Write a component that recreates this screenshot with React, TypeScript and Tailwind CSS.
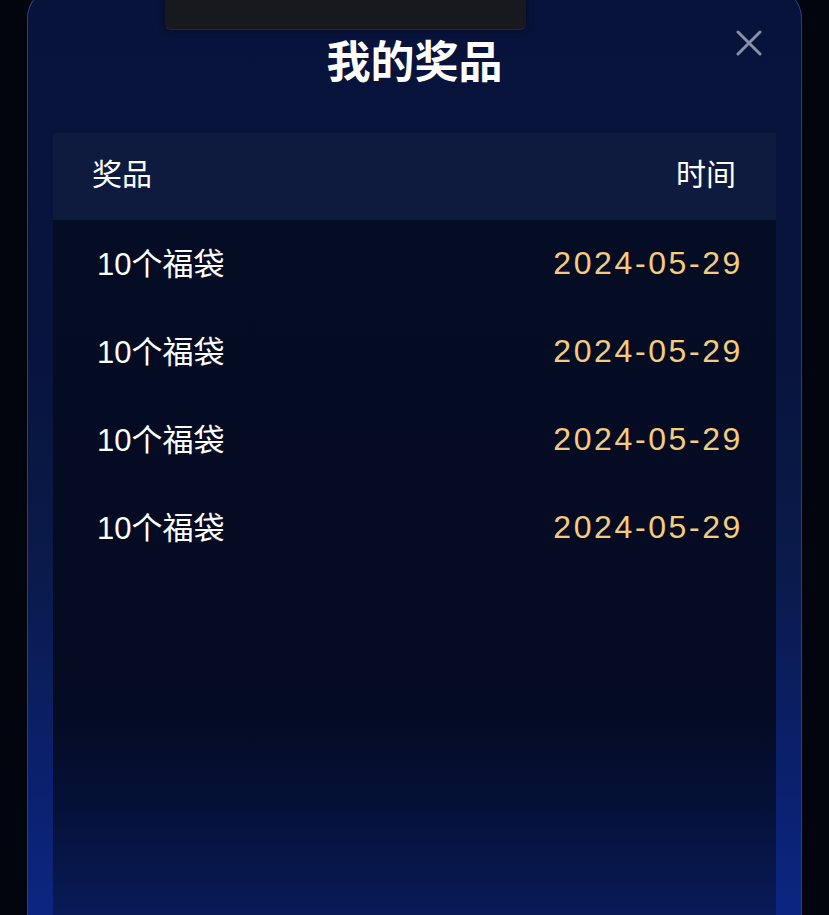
import React from "react";

const rows = [
  { prize: "10个福袋", date: "2024-05-29" },
  { prize: "10个福袋", date: "2024-05-29" },
  { prize: "10个福袋", date: "2024-05-29" },
  { prize: "10个福袋", date: "2024-05-29" },
];

export default function App() {
  return (
    <div
      className="h-[915px] w-full overflow-hidden bg-[#02050d] px-[27px] flex flex-col"
      style={{ fontFamily: '"Liberation Sans", "Noto Sans CJK SC", sans-serif' }}
    >
      <div className="relative mt-[-12px] flex flex-1 flex-col rounded-t-[30px] border-[1.5px] border-b-0 border-[#2a3f86] bg-[linear-gradient(180deg,#08133b_0%,#08143d_40%,#0a1a4a_62%,#0b2170_87%,#0c2680_100%)]">
        {/* top notch */}
        <div className="absolute left-[137px] top-[10px] h-[31px] w-[361px] rounded-b-[6px] border-b border-[#202a38] bg-[#17191f] shadow-[0_0_6px_rgba(0,0,0,0.5)]" />
        {/* close button */}
        <button className="absolute right-[39px] top-[41px] h-[26px] w-[26px]" aria-label="close">
          <svg viewBox="0 0 26 26" className="h-[26px] w-[26px]">
            <path d="M2 2 L24 24 M24 2 L2 24" stroke="#8790a8" strokeWidth="3" strokeLinecap="round" />
          </svg>
        </button>
        <div className="flex h-[144px] items-start justify-center pt-[40px]">
          <h1 className="text-[44px] font-bold leading-[60px] text-white" style={{ fontFamily: '"Noto Sans CJK SC", sans-serif' }}>我的奖品</h1>
        </div>
        <div className="mx-[25px] flex flex-1 flex-col">
          <div className="flex h-[87px] items-center justify-between bg-[#0e1b3f] pb-[4px] pl-[39px] pr-[40px] text-[30px] text-white">
            <span>奖品</span>
            <span>时间</span>
          </div>
          <div className="flex flex-1 flex-col bg-[linear-gradient(180deg,#050d25_0%,#040b23_50%,#040b24_72%,rgba(6,18,62,0.6)_100%)]">
            {rows.map((r, i) => (
              <div key={i} className="flex h-[88px] items-center justify-between pb-[3px] pl-[44px] pr-[36px]">
                <span className="mt-[5px] text-[31px] leading-[40px] text-white">{r.prize}</span>
                <span className="mr-[-3px] text-[32px] leading-[40px] tracking-[2.6px] text-[#f4cc7c]">{r.date}</span>
              </div>
            ))}
          </div>
        </div>
      </div>
    </div>
  );
}
